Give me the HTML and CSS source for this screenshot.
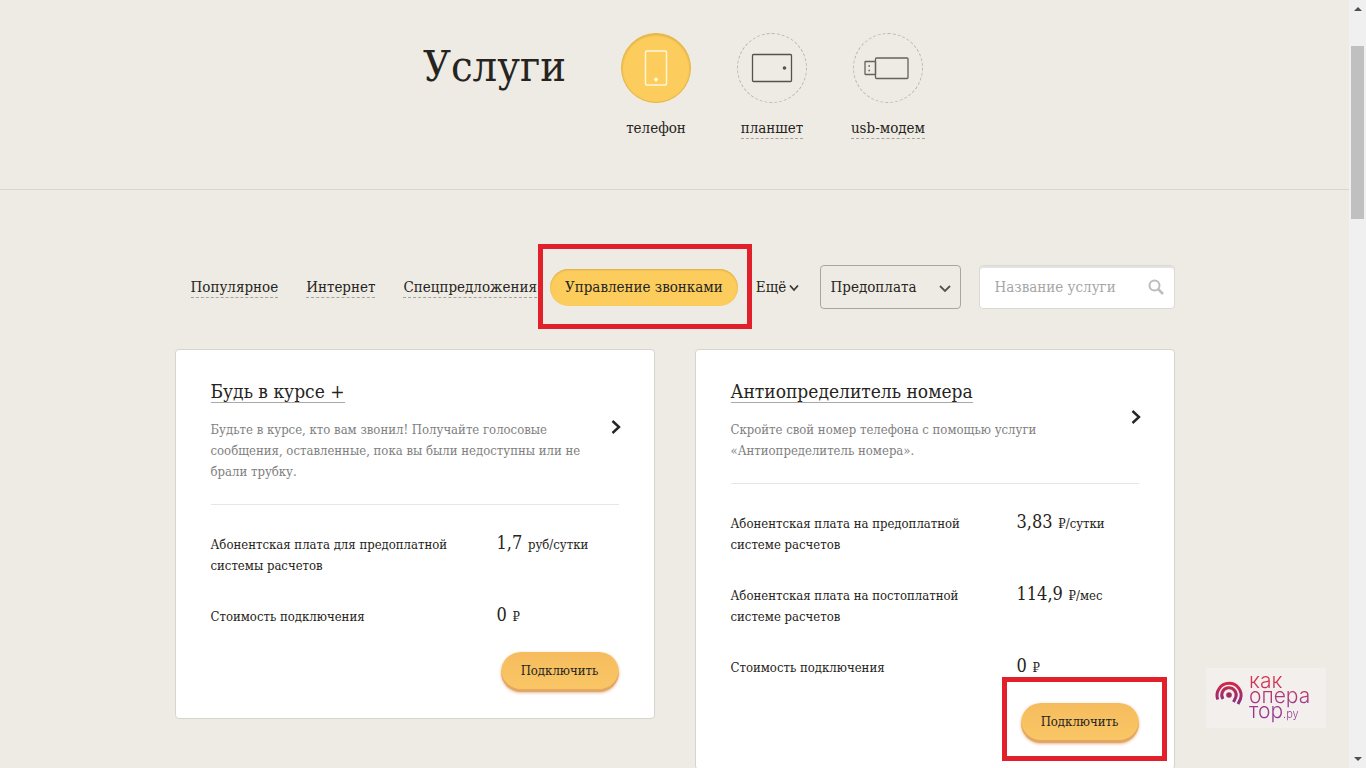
FILE: index.html
```html
<!DOCTYPE html>
<html lang="ru">
<head>
<meta charset="utf-8">
<meta name="viewport" content="width=device-width, initial-scale=1">
<title>Услуги</title>
<link rel="stylesheet" href="styles.css">
</head>
<body>
<div class="window">
  <div class="page">
    <header class="header">
      <h1 class="title">Услуги</h1>
      <nav class="devices" aria-label="Устройства">
        <a class="device" href="#phone">
          <span class="device-circle device-circle-active">
            <svg width="44" height="44" viewBox="0 0 44 44" fill="none" stroke="#fff6dc" stroke-width="1.4" aria-hidden="true"><rect x="11.500" y="5" width="21" height="34" rx="1"/><path d="M22 31.500v4M20 33.500h4" stroke-width="1.800"/></svg>
          </span>
          <span class="device-label device-label-active">телефон</span>
        </a>
        <a class="device" href="#tablet">
          <span class="device-circle">
            <svg width="44" height="44" viewBox="0 0 44 44" fill="none" stroke="#55524b" stroke-width="1.3" aria-hidden="true"><rect x="2.500" y="8.500" width="39" height="27" rx="1"/><circle cx="34.500" cy="22" r="1.800" fill="#55524b" stroke="none"/></svg>
          </span>
          <span class="device-label">планшет</span>
        </a>
        <a class="device" href="#modem">
          <span class="device-circle">
            <svg width="44" height="44" viewBox="0 0 44 44" fill="none" stroke="#65625b" stroke-width="1.3" aria-hidden="true"><rect x="9.500" y="12" width="32.500" height="20.500" rx="1"/><rect x="-1" y="15.500" width="10.500" height="13" rx="0.500"/><path d="M2.400 20h1.600M2.400 24.500h1.600" stroke-width="1.600"/></svg>
          </span>
          <span class="device-label">usb-модем</span>
        </a>
      </nav>
    </header>

    <main class="content">
      <form class="filters">
        <nav class="categories" aria-label="Категории">
          <a class="category" href="#popular">Популярное</a>
          <a class="category" href="#internet">Интернет</a>
          <a class="category" href="#offers">Спецпредложения</a>
          <a class="pill marked marked-pill" href="#calls">Управление звонками</a>
          <button class="more" type="button">Ещё<svg width="10" height="8" viewBox="0 0 10 8" fill="none" stroke="#3a3835" stroke-width="1.800" aria-hidden="true"><path d="M1 2.500l4 4.500 4-4.500"/></svg></button>
        </nav>
        <div class="select-box">
          <select class="select" aria-label="Система расчетов"><option>Предоплата</option><option>Постоплата</option></select>
          <svg class="select-arrow" width="12" height="8" viewBox="0 0 12 8" fill="none" stroke="#55534e" stroke-width="1.800" aria-hidden="true"><path d="M1 1l5 5 5-5"/></svg>
        </div>
        <div class="search-box">
          <input class="search" type="search" placeholder="Название услуги" aria-label="Название услуги">
          <svg class="search-icon" width="16" height="16" viewBox="0 0 16 16" fill="none" stroke="#bdbdbd" stroke-width="2" aria-hidden="true"><circle cx="6.500" cy="6.500" r="5"/><path d="M10 10l5 5" stroke-width="2.500"/></svg>
        </div>
      </form>

      <div class="cards">
        <article class="card">
          <div class="card-head">
            <div class="card-intro">
              <h2 class="card-title"><a href="#service-1">Будь в курсе +</a></h2>
              <p class="card-text">Будьте в курсе, кто вам звонил! Получайте голосовые сообщения, оставленные, пока вы были недоступны или не брали трубку.</p>
            </div>
            <svg class="card-arrow" width="10" height="16" viewBox="0 0 10 16" fill="none" stroke="#262626" stroke-width="2.400" aria-hidden="true"><path d="M1.500 2L8 8l-6.500 6"/></svg>
          </div>
          <dl class="prices">
            <div class="price"><dt>Абонентская плата для предоплатной системы расчетов</dt><dd><b>1,7</b> руб/сутки</dd></div>
            <div class="price"><dt>Стоимость подключения</dt><dd><b>0</b> ₽</dd></div>
          </dl>
          <div class="card-actions"><button class="connect" type="button">Подключить</button></div>
        </article>

        <article class="card">
          <div class="card-head">
            <div class="card-intro">
              <h2 class="card-title"><a href="#service-2">Антиопределитель номера</a></h2>
              <p class="card-text">Скройте свой номер телефона с помощью услуги «Антиопределитель номера».</p>
            </div>
            <svg class="card-arrow" width="10" height="16" viewBox="0 0 10 16" fill="none" stroke="#262626" stroke-width="2.400" aria-hidden="true"><path d="M1.500 2L8 8l-6.500 6"/></svg>
          </div>
          <dl class="prices">
            <div class="price"><dt>Абонентская плата на предоплатной системе расчетов</dt><dd><b>3,83</b> ₽/сутки</dd></div>
            <div class="price"><dt>Абонентская плата на постоплатной системе расчетов</dt><dd><b>114,9</b> ₽/мес</dd></div>
            <div class="price"><dt>Стоимость подключения</dt><dd><b>0</b> ₽</dd></div>
          </dl>
          <div class="card-actions"><button class="connect marked marked-connect" type="button">Подключить</button></div>
        </article>
      </div>
    </main>

    <div class="watermark">
      <svg width="28" height="26" viewBox="0 0 28 26" fill="none" stroke="url(#wave)" stroke-width="3" aria-hidden="true">
        <defs><linearGradient id="wave" gradientUnits="userSpaceOnUse" x1="0" y1="0" x2="0" y2="26"><stop offset="0" stop-color="#d92840"/><stop offset="1" stop-color="#7a2f8c"/></linearGradient></defs>
        <path d="M2.800 18.500A12 12 0 1 1 25.500 18L23 23"/><path d="M8 18A7.200 7.200 0 1 1 20.700 16.500L18.500 21"/><circle cx="14" cy="14" r="2.800" fill="#a02c62" stroke="none"/>
      </svg>
      <div class="watermark-text">как<br>опера<br>тор<small>.ру</small></div>
    </div>
  </div>
  <div class="scrollbar" aria-hidden="true">
    <span class="scroll-up"></span><span class="scroll-thumb"></span><span class="scroll-down"></span>
  </div>
</div>
</body>
</html>
```
FILE: styles.css
```css
* { box-sizing: border-box; }
body, h1, h2, p, dl, dd { margin: 0; }
body, button, input, select {
  font-family: "DejaVu Serif Condensed", "DejaVu Serif", serif;
  font-size: 15px;
  color: #262420;
}
a { color: inherit; text-decoration: none; }
svg { flex: none; overflow: visible; }

.window { display: flex; height: 100vh; overflow: hidden; background: #eeebe4; }
.page { flex: 1; min-width: 0; position: relative; overflow: hidden; }

.header {
  display: flex;
  justify-content: center;
  gap: 52px;
  padding: 33px 20px 50px;
  border-bottom: 1px solid #d9d6cf;
}
.title { font-size: 43px; font-weight: 400; line-height: 66px; }
.devices { display: flex; gap: 40px; }
.device { display: flex; flex-direction: column; align-items: center; gap: 16px; width: 76px; }
.device-circle {
  display: flex; align-items: center; justify-content: center;
  width: 70px; height: 70px;
  border: 1px dashed #b9b6af; border-radius: 50%;
}
.device-circle-active {
  border: 1px solid #e5b548;
  background: #fccd5c;
  box-shadow: inset 0 1px 2px #d9ab45;
}
.device-label { line-height: 19px; border-bottom: 1px dashed #a5a29b; white-space: nowrap; }
.device-label-active { border-color: transparent; }

.content { max-width: 1000px; margin: 0 auto; padding-top: 75px; }
.filters { display: flex; align-items: center; gap: 18px; }
.categories { flex: 1; min-width: 0; display: flex; align-items: center; gap: 28px; padding-left: 16px; white-space: nowrap; }
.category { line-height: 20px; border-bottom: 1px dashed #a5a29b; }
.pill {
  margin: 0 -15px; padding: 0 15px;
  line-height: 37px; border-radius: 19px;
  background: #fccd5c;
  box-shadow: inset 0 1px 2px #d9ab45;
}
.more { display: flex; align-items: center; gap: 3px; margin-left: 5px; padding: 0; border: 0; background: none; }
.marked { position: relative; }
.marked::after { content: ""; position: absolute; border: 5px solid #e1202b; pointer-events: none; }
.marked-pill::after { inset: -25px -14px -23px -12px; }
.marked-connect::after { inset: -26px -28px -18px -19px; }

.select-box { flex: none; position: relative; width: 141px; }
.select {
  width: 100%; height: 44px; padding: 0 10px;
  appearance: none; background: transparent;
  border: 1px solid #a9a69f; border-radius: 4px;
}
.select-arrow { position: absolute; right: 10px; top: 20px; pointer-events: none; }
.search-box { flex: none; position: relative; width: 196px; }
.search {
  width: 100%; height: 44px; padding: 0 40px 0 15px;
  appearance: none; background: #fff;
  border: 1px solid #dcdad5; border-radius: 4px;
  box-shadow: inset 0 2px 0 #e2e2e0;
}
.search::placeholder { color: #a6a6a6; opacity: 1; }
.search-icon { position: absolute; right: 11px; top: 14px; }

.cards { display: grid; grid-template-columns: 1fr 1fr; gap: 40px; align-items: start; margin-top: 40px; }
.card { padding: 22px 35px 26px; background: #fff; border: 1px solid #d6d4cf; border-radius: 4px; }
.card-head { display: flex; align-items: center; justify-content: space-between; padding-bottom: 22px; }
.card-intro { width: 385px; }
.card-arrow { margin-right: -2px; }
.card-title { margin-bottom: 9px; font-size: 19px; font-weight: 400; line-height: 38px; }
.card-title a { border-bottom: 1px solid #a9a9a9; }
.card-text { color: #808080; font-size: 13px; line-height: 21px; }
.prices {
  display: grid; gap: 30px; padding-top: 29px;
  border-top: 1px solid #e6e6e6;
  font-size: 13px; line-height: 21px;
}
.price { display: grid; grid-template-columns: 250px 1fr; gap: 36px; align-items: baseline; }
.price b { margin-right: 2px; font-size: 18px; font-weight: 400; line-height: 10px; }
.card-actions { display: flex; justify-content: flex-end; margin-top: 25px; }
.connect {
  width: 118px; height: 40px; padding: 0 0 3px;
  border: 0; border-radius: 20px;
  background: linear-gradient(#f5bc5e, #fac766);
  box-shadow: inset 0 -3px 0 #e0a864, 0 1px 3px #e8b898;
  font-size: 13px;
}

.watermark {
  position: absolute; right: 23px; bottom: 40px;
  display: flex; align-items: center; gap: 6px;
  width: 120px; height: 60px; padding: 0 0 8px 9px;
  background: #f3efec;
}
.watermark-text {
  font-family: Inter, "Liberation Sans", sans-serif;
  font-size: 21px; font-weight: 300; line-height: 15px;
  color: transparent;
  background: linear-gradient(#e0303c 20%, #a23a86 60%, #8a3a9c);
  background-clip: text;
  padding: 12px 0 6px;
}
.watermark-text small { font-size: 11px; }

.scrollbar {
  display: flex; flex-direction: column; align-items: center;
  width: 17px; padding: 7px 0; background: #f1f0f0;
}
.scroll-up, .scroll-down { border: 4px solid transparent; }
.scroll-up { border-top: 0; border-bottom-color: #505050; }
.scroll-down { border-bottom: 0; border-top-color: #505050; margin-top: auto; }
.scroll-thumb { width: 13px; height: 173px; margin-top: 35px; background: #c1c0c0; }
```
